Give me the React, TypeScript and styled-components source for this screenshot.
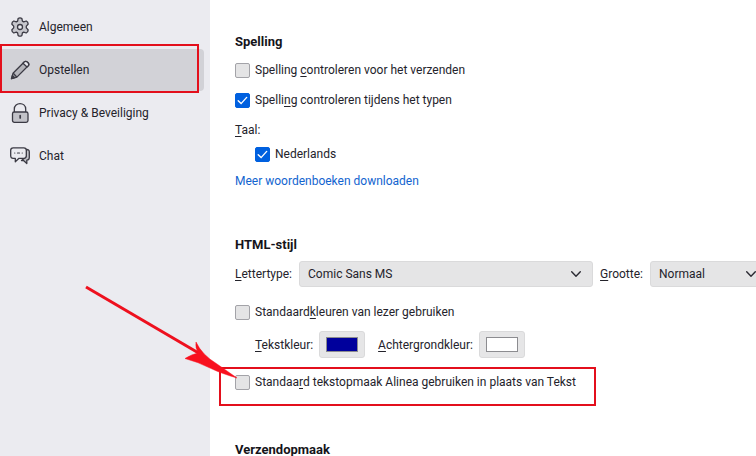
import React, { useId, useState } from "react";
import styled, { createGlobalStyle, css } from "styled-components";

const Global = createGlobalStyle`
  * { box-sizing: border-box; }
  body {
    margin: 0;
    background: #fff;
    color: #24232b;
    font: 12px/20px Roboto, "Open Sans", sans-serif;
    overflow: hidden;
  }
`;

const Page = styled.div`
  position: relative;
  display: flex;
  min-height: 100vh;
  overflow: hidden;
`;

const Sidebar = styled.nav`
  flex: 0 0 210px;
  display: flex;
  flex-direction: column;
  gap: 1px;
  padding: 6px 6px 0 0;
  background: #ebebf0;
`;

const Category = styled.button<{ $active?: boolean }>`
  display: flex;
  align-items: center;
  gap: 9px;
  height: 42px;
  padding: 0 0 0 10px;
  border: 0;
  border-radius: 0 4px 4px 0;
  background: ${(p) => (p.$active ? "#d2d2d7" : "transparent")};
  color: inherit;
  font: inherit;
  text-align: left;

  svg {
    flex: none;
    width: 20px;
    height: 20px;
  }
`;

const Main = styled.main`
  flex: 1;
  min-width: 0;
  display: flex;
  flex-direction: column;
  padding: 32px 0 0 25px;
  height: 100vh;
  overflow: hidden;
`;

const Section = styled.section`
  flex: none;
  margin-bottom: 44px;
`;

const Heading = styled.h2<{ $gap?: number }>`
  margin: 0 0 ${(p) => p.$gap ?? 8}px;
  font-size: 13px;
  line-height: 20px;
  font-weight: 700;
  color: #15141a;
`;

const LastHeading = styled(Heading)`
  margin-bottom: 0;
  line-height: 16px;
  padding-top: 2px;
`;

const Line = styled.div<{ $indent?: boolean; $gap?: number }>`
  display: flex;
  align-items: center;
  min-height: 20px;
  margin-bottom: ${(p) => p.$gap ?? 10}px;
  padding-left: ${(p) => (p.$indent ? 20 : 0)}px;
  white-space: nowrap;
`;

const FontLine = styled(Line)`
  margin-right: -12px;
`;

const Tick = styled.input`
  appearance: none;
  flex: none;
  width: 15px;
  height: 15px;
  margin: 0 5px 0 0;
  border: 1px solid #a3a3a8;
  border-radius: 2px;
  background: #e4e4e5;

  &:checked {
    border-color: #0060df;
    background: #0060df
      url("data:image/svg+xml,%3Csvg xmlns='http://www.w3.org/2000/svg' viewBox='0 0 13 13'%3E%3Cpath d='M2.2 6.7l2.9 2.9 5.6-6.2' fill='none' stroke='white' stroke-width='1.4' stroke-linecap='round'/%3E%3C/svg%3E")
      center / 13px 13px;
  }
`;

const Key = styled.u`
  text-underline-offset: 2px;
  text-decoration-thickness: 1px;
  text-decoration-skip-ink: none;
`;

const DownloadLink = styled.a`
  color: #1264cf;
  text-decoration: none;
`;

const SelectFrame = styled.div<{ $grow?: boolean }>`
  position: relative;
  ${(p) =>
    p.$grow
      ? css`
          flex: 1;
          margin: 0 7px 0 7px;
        `
      : css`
          flex: 0 0 118px;
          margin-left: 7px;
        `}

  svg {
    position: absolute;
    right: 11px;
    top: 8px;
    width: 12px;
    height: 10px;
    pointer-events: none;
  }
`;

const Select = styled.select`
  appearance: none;
  display: block;
  width: 100%;
  height: 26px;
  padding: 0 30px 0 8px;
  border: 1px solid #dadadb;
  border-radius: 3px;
  background: #e5e5e6;
  color: inherit;
  font: inherit;
`;

const Swatch = styled.input`
  appearance: none;
  width: 46px;
  height: 27px;
  margin: 0 13px 0 6px;
  padding: 5px 6px;
  border: 1px solid #dadadb;
  border-radius: 3px;
  background: #e6e6e7;

  &::-webkit-color-swatch-wrapper { padding: 0; }
  &::-webkit-color-swatch {
    border: 1px solid #8c8c90;
    border-radius: 0;
  }
`;

const Highlight = styled.div<{ $x: number; $y: number; $w: number; $h: number }>`
  position: absolute;
  left: ${(p) => p.$x}px;
  top: ${(p) => p.$y}px;
  width: ${(p) => p.$w}px;
  height: ${(p) => p.$h}px;
  border: 2px solid #e30f1c;
  pointer-events: none;
`;

const Arrow = styled.svg`
  position: absolute;
  left: 80px;
  top: 280px;
  width: 164px;
  height: 104px;
  pointer-events: none;
`;

const stroke = { stroke: "#3b3a44", strokeWidth: 1.3, strokeLinejoin: "round", strokeLinecap: "round" } as const;

const GearIcon = () => (
  <svg viewBox="0 0 20 20" fill="#c6c6cc" {...stroke}>
    <path d="M8.1 1.6Q10 .1 11.9 1.6L12.4 4.1 13.7 4.9 16.2 4Q18.3 4.9 18.1 7.3L16.3 9.1V10.9L18.1 12.7Q18.3 15.1 16.2 16L13.7 15.1 12.4 15.9 11.9 18.4Q10 19.9 8.1 18.4L7.6 15.9 6.3 15.1 3.8 16Q1.7 15.1 1.9 12.7L3.7 10.9V9.1L1.9 7.3Q1.7 4.9 3.8 4L6.3 4.9 7.6 4.1Z" />
    <circle cx="10" cy="10" r="2.5" fill="#ebebf0" />
  </svg>
);

const PencilIcon = () => (
  <svg viewBox="0 0 20 20" fill="#b4b4ba" {...stroke}>
    <path d="M1.5 18.7L3 13.3 14.2 2Q15.8.6 17.5 2.2L18 2.7Q19.5 4.3 18.2 5.8L6.9 17.1Z" />
    <path d="M14.2 2Q15.8.6 17.5 2.2L18 2.7Q19.5 4.3 18.2 5.8L17 7 13 3.2Z" fill="#ebebf0" />
    <path d="M1.5 18.7L2.4 15.5 4.7 17.7Z" fill="#3b3a44" />
    <path d="M3.5 13.5L6.5 16.7" fill="none" />
  </svg>
);

const LockIcon = () => (
  <svg viewBox="0 0 20 20" fill="none" {...stroke}>
    <path d="M4.3 9V6.2C4.3-1.2 15.7-1.2 15.7 6.2V9" />
    <rect x="2.5" y="9" width="15.5" height="10.3" rx="1.8" fill="#c2c2c8" />
    <path d="M10.2 12.7v2.3" strokeWidth="1.7" />
  </svg>
);

const ChatIcon = () => (
  <svg viewBox="0 0 20 20" fill="none" {...stroke}>
    <path d="M16.3 3.5Q19.3 3.3 19.3 6V11.5Q19.3 14 16.8 14.2V17.5L13.5 14.5H11.5L14.2 12.5 16 10Z" fill="#c2c2c8" />
    <path d="M3.2 1.8H13.8Q16.3 1.8 16.3 4.3V9.8Q16.3 12.3 13.8 12.3H9L5.3 15.8V12.3H3.2Q.7 12.3.7 9.8V4.3Q.7 1.8 3.2 1.8Z" fill="#ebebf0" />
    <path d="M4.7 7h.1M7.5 7h2M12.2 7h.1" strokeWidth="1.2" />
  </svg>
);

const Chevron = () => (
  <svg viewBox="0 0 12 10" fill="none" stroke="#2b2a33" strokeWidth="1.4" strokeLinecap="round" strokeLinejoin="round">
    <path d="M1.7 2.7L6 7.2 10.3 2.7" />
  </svg>
);

type CheckProps = { children: React.ReactNode; checked?: boolean; indent?: boolean; gap?: number };

function Check({ children, checked = false, indent, gap }: CheckProps) {
  const id = useId();
  return (
    <Line $indent={indent} $gap={gap}>
      <Tick id={id} type="checkbox" defaultChecked={checked} />
      <label htmlFor={id}>{children}</label>
    </Line>
  );
}

const categories = [
  { name: "Algemeen", Icon: GearIcon },
  { name: "Opstellen", Icon: PencilIcon },
  { name: "Privacy & Beveiliging", Icon: LockIcon },
  { name: "Chat", Icon: ChatIcon },
];

export default function App() {
  const [active, setActive] = useState("Opstellen");
  return (
    <Page>
      <Global />
      <Sidebar>
        {categories.map(({ name, Icon }) => (
          <Category key={name} $active={name === active} onClick={() => setActive(name)}>
            <Icon />
            {name}
          </Category>
        ))}
      </Sidebar>
      <Main>
        <Section>
          <Heading>Spelling</Heading>
          <Check>Spelling <Key>c</Key>ontroleren voor het verzenden</Check>
          <Check checked>Spelli<Key>n</Key>g controleren tijdens het typen</Check>
          <Line $gap={4}><span><Key>T</Key>aal:</span></Line>
          <Check checked indent gap={7}>Nederlands</Check>
          <Line $gap={0}><DownloadLink href="#woordenboeken">Meer woordenboeken downloaden</DownloadLink></Line>
        </Section>
        <Section>
          <Heading $gap={6}>HTML-stijl</Heading>
          <FontLine $gap={15}>
            <label htmlFor="font"><Key>L</Key>ettertype:</label>
            <SelectFrame $grow>
              <Select id="font"><option>Comic Sans MS</option></Select>
              <Chevron />
            </SelectFrame>
            <label htmlFor="size"><Key>G</Key>rootte:</label>
            <SelectFrame>
              <Select id="size"><option>Normaal</option></Select>
              <Chevron />
            </SelectFrame>
          </FontLine>
          <Check gap={9}>Standaard<Key>k</Key>leuren van lezer gebruiken</Check>
          <Line $indent $gap={14}>
            <label htmlFor="text-color"><Key>T</Key>ekstkleur:</label>
            <Swatch id="text-color" type="color" defaultValue="#00009c" />
            <label htmlFor="back-color"><Key>A</Key>chtergrondkleur:</label>
            <Swatch id="back-color" type="color" defaultValue="#ffffff" />
          </Line>
          <Check gap={4}>Standaa<Key>r</Key>d tekstopmaak Alinea gebruiken in plaats van Tekst</Check>
        </Section>
        <LastHeading>Verzendopmaak</LastHeading>
      </Main>
      <Highlight $x={0} $y={44} $w={199} $h={49} />
      <Highlight $x={219} $y={367} $w={377} $h={39} />
      <Arrow viewBox="0 0 164 104" aria-hidden="true">
        <path d="M6 7L122 75" stroke="#ee101e" strokeWidth="3" />
        <path d="M157 98Q140 93 130 88Q118 82 105 78.500Q112 74 118.500 73Q115 68 116 62Q122 75 137 84Z" fill="#f8101e" stroke="#f8101e" strokeWidth="0.5" />
      </Arrow>
    </Page>
  );
}
